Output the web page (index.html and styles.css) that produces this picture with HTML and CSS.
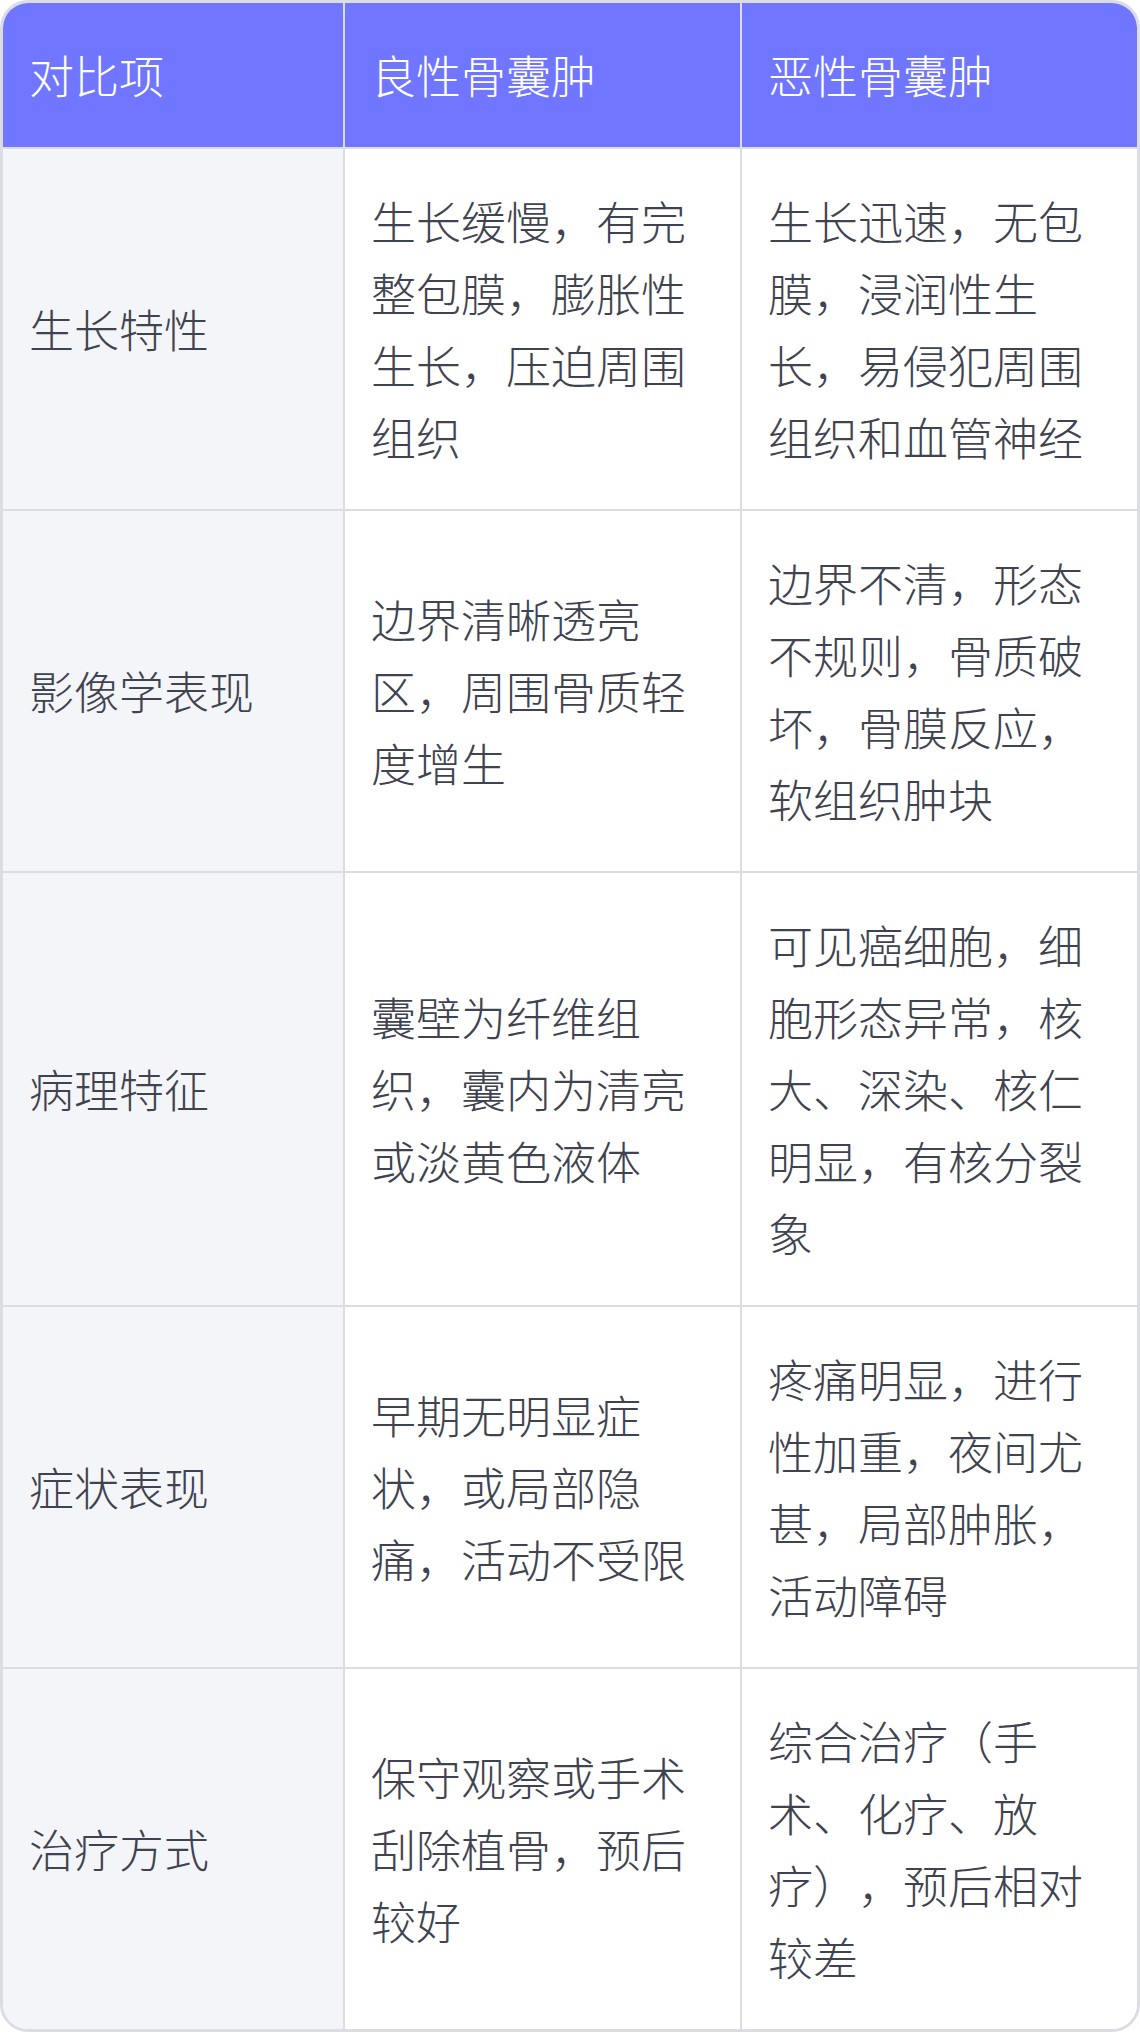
FILE: index.html
```html
<!DOCTYPE html>
<html lang="zh-CN">
<head>
<meta charset="utf-8">
<link rel="stylesheet" href="styles.css">
</head>
<body>
<div class="wrap">
<table class="cmp">
<colgroup><col class="c1"><col class="c2"><col class="c3"></colgroup>
<thead>
<tr><th>对比项</th><th>良性骨囊肿</th><th>恶性骨囊肿</th></tr>
</thead>
<tbody>
<tr><td>生长特性</td><td>生长缓慢，有完整包膜，膨胀性生长，压迫周围组织</td><td>生长迅速，无包膜，浸润性生长，易侵犯周围组织和血管神经</td></tr>
<tr><td>影像学表现</td><td>边界清晰透亮区，周围骨质轻度增生</td><td>边界不清，形态不规则，骨质破坏，骨膜反应，软组织肿块</td></tr>
<tr><td>病理特征</td><td>囊壁为纤维组织，囊内为清亮或淡黄色液体</td><td>可见癌细胞，细胞形态异常，核大、深染、核仁明显，有核分裂象</td></tr>
<tr><td>症状表现</td><td>早期无明显症状，或局部隐痛，活动不受限</td><td>疼痛明显，进行性加重，夜间尤甚，局部肿胀，活动障碍</td></tr>
<tr><td>治疗方式</td><td>保守观察或手术刮除植骨，预后较好</td><td>综合治疗（手术、化疗、放疗），预后相对较差</td></tr>
</tbody>
</table>
</div>
</body>
</html>
```
FILE: styles.css
```css
html, body {
  margin: 0;
  padding: 0;
  background: #ffffff;
}
.wrap {
  width: 1140px;
  box-sizing: border-box;
  border: 3px solid #dcdde3;
  border-radius: 28px;
  overflow: hidden;
}
.cmp {
  width: 100%;
  border-collapse: separate;
  border-spacing: 0;
  table-layout: fixed;
  font-family: "Noto Sans CJK SC", "Noto Sans", sans-serif;
  font-size: 45px;
  line-height: 72px;
  font-weight: 300;
  color: #3f4350;
  text-spacing-trim: space-all;
}
.c1 { width: 342px; }
.c2 { width: 397px; }
.c3 { width: 395px; }
.cmp th, .cmp td {
  padding: 36px 26px;
  text-align: left;
  vertical-align: middle;
  border-right: 2px solid #dcdde3;
  border-bottom: 2px solid #dcdde3;
}
.cmp tr > :last-child { border-right: none; }
.cmp tbody tr:last-child td { border-bottom: none; }
.cmp th {
  background: #7076ff;
  color: #ffffff;
  font-weight: 300;
}
.cmp td {
  background: #ffffff;
}
.cmp td:first-child {
  background: #f4f5f9;
}
```
